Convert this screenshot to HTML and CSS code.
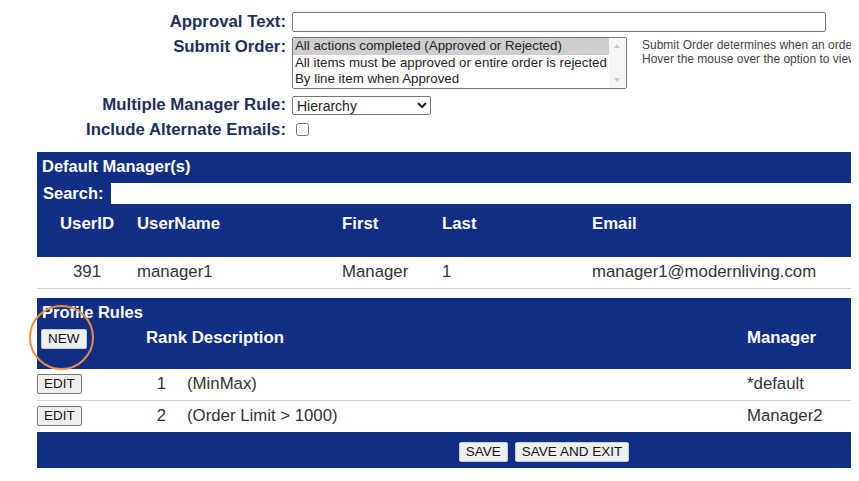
FILE: index.html
```html
<!DOCTYPE html>
<html lang="en">

<head>
    <meta charset="UTF-8">
    <meta name="viewport" content="width=device-width, initial-scale=1.0">
    <title>Approval Profile</title>
    <link rel="stylesheet" href="styles.css">
</head>

<body>
    <div class="form-grid">
        <label for="description">Description:</label>
        <input type="text" id="description" class="text-input" value="Manager 1">

        <label for="approvalText">Approval Text:</label>
        <input type="text" id="approvalText" class="text-input">

        <label class="label-top">Submit Order:</label>
        <div class="submit-order">
            <div class="listbox" role="listbox">
                <div class="listbox-options">
                    <div class="listbox-option selected" role="option">All actions completed (Approved or Rejected)</div>
                    <div class="listbox-option" role="option">All items must be approved or entire order is rejected</div>
                    <div class="listbox-option" role="option">By line item when Approved</div>
                </div>
                <div class="listbox-scroll">
                    <span class="arrow-up"></span>
                    <span class="arrow-down"></span>
                </div>
            </div>
            <div class="help-text">
                Submit Order determines when an order<br>
                Hover the mouse over the option to view
            </div>
        </div>

        <label for="managerRule">Multiple Manager Rule:</label>
        <div>
            <select id="managerRule" class="dropdown">
                <option>Hierarchy</option>
                <option>Any</option>
                <option>All</option>
            </select>
        </div>

        <label for="altEmails">Include Alternate Emails:</label>
        <div>
            <input type="checkbox" id="altEmails" class="checkbox">
        </div>
    </div>

    <!-- default managers -->
    <div class="panel">
        <div class="panel-title">Default Manager(s)</div>
        <div class="search-row">
            <label for="search">Search:</label>
            <input type="text" id="search" class="search-input">
        </div>
        <table class="grid">
            <colgroup>
                <col style="width: 100px">
                <col style="width: 205px">
                <col style="width: 100px">
                <col style="width: 150px">
                <col>
            </colgroup>
            <thead>
                <tr>
                    <th class="center">UserID</th>
                    <th>UserName</th>
                    <th>First</th>
                    <th>Last</th>
                    <th>Email</th>
                </tr>
            </thead>
            <tbody>
                <tr>
                    <td class="center">391</td>
                    <td>manager1</td>
                    <td>Manager</td>
                    <td>1</td>
                    <td>manager1@modernliving.com</td>
                </tr>
            </tbody>
        </table>
    </div>

    <!-- profile rules -->
    <div class="panel">
        <div class="panel-title">Profile Rules</div>
        <table class="grid rules">
            <colgroup>
                <col style="width: 109px">
                <col style="width: 31px">
                <col style="width: 570px">
                <col>
            </colgroup>
            <thead>
                <tr>
                    <th class="new-cell">
                        <span class="new-wrap">
                            <button class="btn btn-light">NEW</button>
                            <span class="highlight-ring"></span>
                        </span>
                    </th>
                    <th colspan="2">Rank Description</th>
                    <th>Manager</th>
                </tr>
            </thead>
            <tbody>
                <tr>
                    <td><button class="btn">EDIT</button></td>
                    <td class="center">1</td>
                    <td class="desc">(MinMax)</td>
                    <td>*default</td>
                </tr>
                <tr>
                    <td><button class="btn">EDIT</button></td>
                    <td class="center">2</td>
                    <td class="desc">(Order Limit &gt; 1000)</td>
                    <td>Manager2</td>
                </tr>
            </tbody>
        </table>
        <div class="panel-footer">
            <button class="btn btn-light">SAVE</button>
            <button class="btn btn-light">SAVE AND EXIT</button>
        </div>
    </div>
</body>

</html>
```

FILE: styles.css
```css
html {
    overflow: hidden;
}

body {
    font-family: "Liberation Sans", Arial, sans-serif;
    margin: 8px;
    background-color: #fff;
    color: #333;
}

.form-grid {
    display: grid;
    grid-template-columns: 278px auto;
    column-gap: 6px;
    row-gap: 5px;
    align-items: center;
    margin-top: -21px;
}

.form-grid label {
    text-align: right;
    font-weight: bold;
    font-size: 16.8px;
    color: #1e2f5c;
}

.form-grid .label-top {
    align-self: start;
}

.text-input {
    width: 534px;
    height: 20px;
    box-sizing: border-box;
    padding: 0 2px;
    border: 1px solid #767676;
    border-radius: 2px;
    font-family: "Liberation Sans", Arial, sans-serif;
    font-size: 14px;
    color: #333;
}

.submit-order {
    display: flex;
    align-items: flex-start;
    white-space: nowrap;
}

/* list box with an always-on scrollbar */
.listbox {
    display: flex;
    width: 335px;
    height: 52px;
    box-sizing: border-box;
    border: 1px solid #767676;
    border-radius: 2px;
    background-color: #fff;
    font-size: 13.3px;
    color: #222;
    overflow: hidden;
}

.listbox-options {
    flex: 1;
}

.listbox-option {
    height: 16.6px;
    line-height: 16px;
    padding: 0 2px;
}

.listbox-option.selected {
    background-color: #cecece;
}

.listbox-scroll {
    position: relative;
    width: 17px;
    background-color: #f6f6f6;
}

.arrow-up,
.arrow-down {
    position: absolute;
    left: 5px;
    width: 0;
    height: 0;
    border-left: 3.5px solid transparent;
    border-right: 3.5px solid transparent;
}

.arrow-up {
    top: 6px;
    border-bottom: 4px solid #c6c6c6;
}

.arrow-down {
    bottom: 6px;
    border-top: 4px solid #c6c6c6;
}

.help-text {
    margin-left: 15px;
    padding-top: 1px;
    font-size: 12px;
    line-height: 14px;
    color: #444;
}

.dropdown {
    width: 139px;
    height: 19px;
    margin-top: 2px;
    border: 1px solid #767676;
    border-radius: 2px;
    font-family: "Liberation Sans", Arial, sans-serif;
    font-size: 14px;
    color: #222;
    background-color: #fff;
}

.checkbox {
    margin: 2px 3px 3px 4px;
    vertical-align: middle;
}

/* blue panels */
.panel {
    width: 1014px;
    margin-left: 29px;
    background-color: #0f2e84;
}

.panel + .panel {
    margin-top: 9px;
}

.form-grid + .panel {
    margin-top: 12px;
}

.panel-title {
    padding: 5px 5px 0;
    height: 25px;
    font-size: 16.5px;
    font-weight: bold;
    color: #fff;
}

.search-row {
    display: flex;
    align-items: stretch;
    height: 22px;
}

.search-row label {
    padding: 0 7px 0 6px;
    font-size: 16.5px;
    font-weight: bold;
    line-height: 22px;
    color: #fff;
}

.search-input {
    flex: 1;
    margin-top: 1px;
    border: none;
    padding: 0 4px;
    font-size: 14px;
}

.grid {
    width: 100%;
    border-collapse: collapse;
    table-layout: fixed;
    font-size: 16.8px;
}

.grid th {
    height: 19px;
    padding: 10px 0 23px;
    text-align: left;
    font-weight: bold;
    color: #fff;
}

.grid td {
    height: 19px;
    padding: 5px 0 6px;
    background-color: #fff;
    border-bottom: 1px solid #d4d4d4;
    color: #333;
}

.grid .center {
    text-align: center;
}

.rules th {
    height: 20px;
    padding: 0 0 20px;
    vertical-align: middle;
}

.rules th.new-cell {
    padding-left: 4px;
}

.rules td {
    height: 20px;
    padding: 5px 0 6px;
}

.rules tbody tr:last-child td {
    border-bottom: none;
}

.rules .desc {
    padding-left: 10px;
}

.new-wrap {
    position: relative;
    display: inline-block;
    vertical-align: middle;
}

/* orange marker drawn round the NEW button */
.highlight-ring {
    position: absolute;
    left: -12px;
    top: -24px;
    width: 61px;
    height: 61px;
    border: 2.5px solid #ee8d42;
    border-radius: 50%;
    pointer-events: none;
}

.btn {
    display: block;
    height: 20px;
    padding: 0 6px;
    font-family: "Liberation Sans", Arial, sans-serif;
    font-size: 13.5px;
    color: #111;
    background-color: #efefef;
    border: 1px solid #767676;
    border-radius: 2px;
    cursor: pointer;
}

.btn-light {
    border-color: #c9ccd6;
}

.panel-footer {
    display: flex;
    justify-content: center;
    gap: 7px;
    padding: 10px 0 6px;
}
```
